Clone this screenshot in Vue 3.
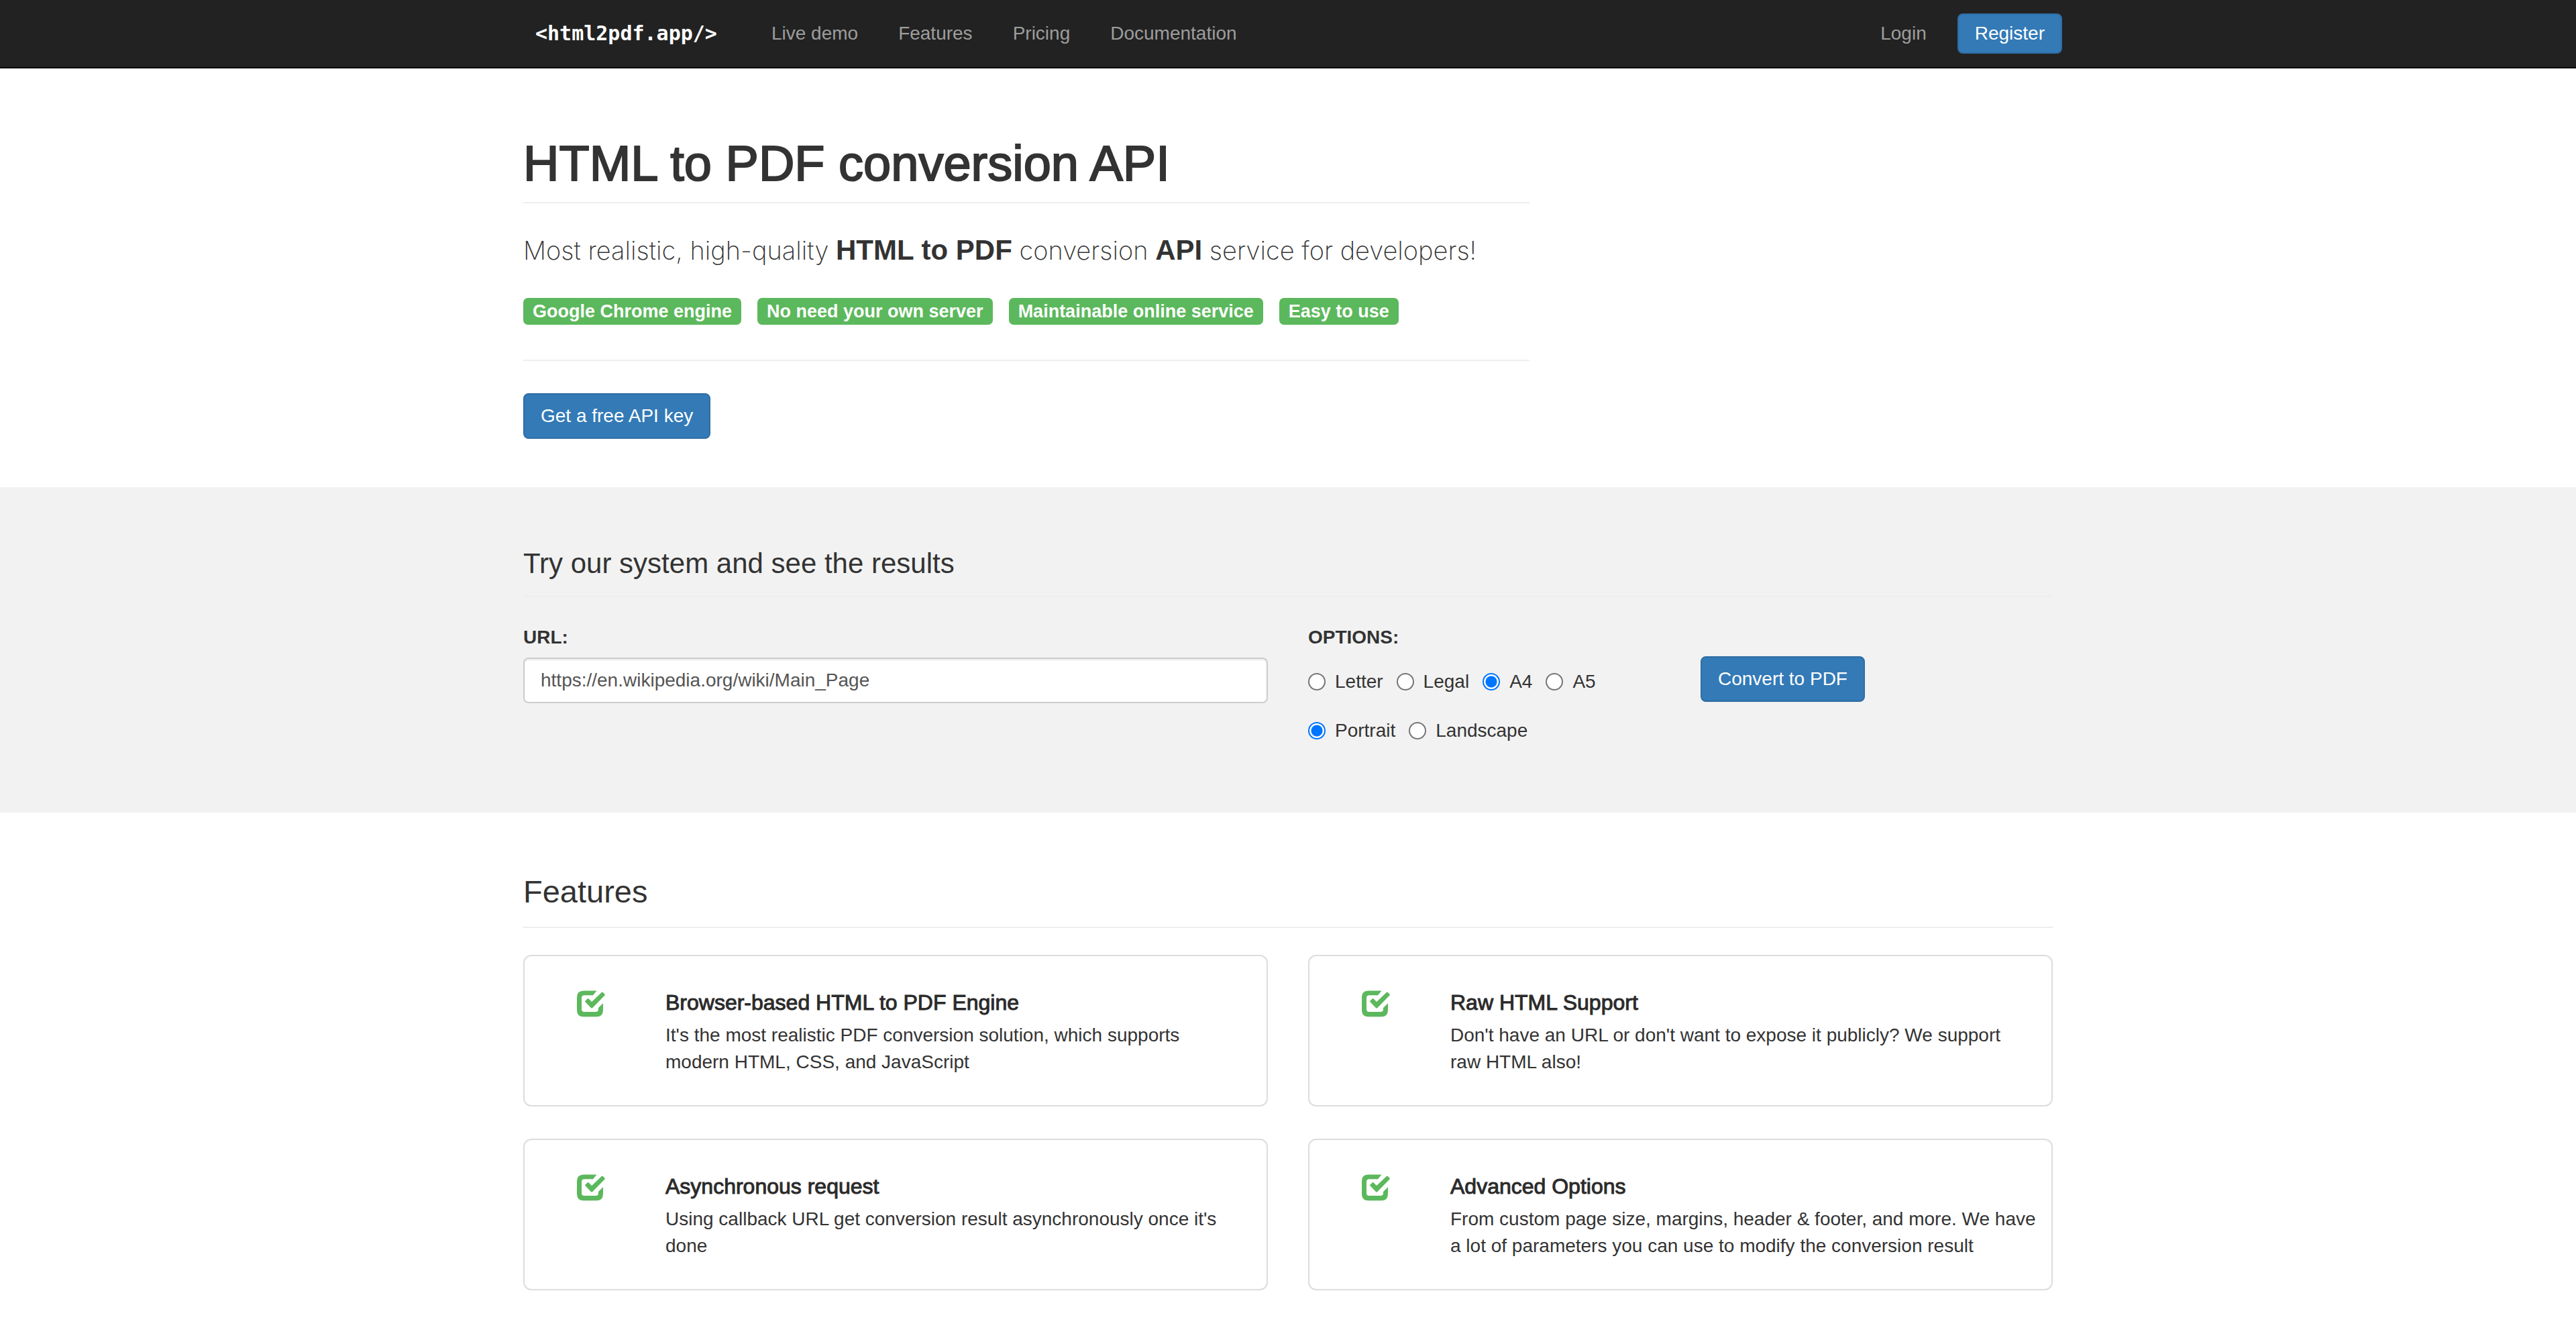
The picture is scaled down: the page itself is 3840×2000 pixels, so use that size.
<script setup>
import { ref } from 'vue'

const links = ['Live demo', 'Features', 'Pricing', 'Documentation']
const labels = ['Google Chrome engine', 'No need your own server', 'Maintainable online service', 'Easy to use']
const sizes = ['Letter', 'Legal', 'A4', 'A5']
const orientations = ['Portrait', 'Landscape']
const features = [
  { title: 'Browser-based HTML to PDF Engine', text: "It's the most realistic PDF conversion solution, which supports\nmodern HTML, CSS, and JavaScript" },
  { title: 'Raw HTML Support', text: "Don't have an URL or don't want to expose it publicly? We support\nraw HTML also!" },
  { title: 'Asynchronous request', text: "Using callback URL get conversion result asynchronously once it's\ndone" },
  { title: 'Advanced Options', text: 'From custom page size, margins, header & footer, and more. We have\na lot of parameters you can use to modify the conversion result' }
]
const url = ref('https://en.wikipedia.org/wiki/Main_Page')
const size = ref('A4')
const orientation = ref('Portrait')
</script>

<template>
  <div class="page">
    <header class="navbar">
      <nav class="container nav">
        <a class="brand" href="#">&lt;html2pdf.app/&gt;</a>
        <a v-for="link in links" :key="link" class="nav-link" href="#">{{ link }}</a>
        <a class="nav-link login" href="#">Login</a>
        <button class="btn btn-small" type="button">Register</button>
      </nav>
    </header>

    <main>
      <section class="container hero">
        <div class="intro">
          <h1>HTML to PDF conversion API</h1>
          <p class="lead">Most realistic, high-quality <strong>HTML to PDF</strong> conversion <strong>API</strong> service for developers!</p>
          <div class="labels">
            <span v-for="label in labels" :key="label" class="label">{{ label }}</span>
          </div>
          <hr>
          <button class="btn" type="button">Get a free API key</button>
        </div>
      </section>

      <section class="demo">
        <form class="container" @submit.prevent>
          <h2 class="demo-title">Try our system and see the results</h2>
          <div class="columns">
            <div>
              <label class="field-label" for="url">URL:</label>
              <input id="url" v-model="url" class="url" type="text">
            </div>
            <div class="columns">
              <div role="group" aria-labelledby="options">
                <span id="options" class="field-label">OPTIONS:</span>
                <div class="radios">
                  <label v-for="s in sizes" :key="s" class="radio"><input v-model="size" type="radio" name="size" :value="s">{{ s }}</label>
                </div>
                <div class="radios">
                  <label v-for="o in orientations" :key="o" class="radio"><input v-model="orientation" type="radio" name="orientation" :value="o">{{ o }}</label>
                </div>
              </div>
              <div class="submit">
                <button class="btn" type="submit">Convert to PDF</button>
              </div>
            </div>
          </div>
        </form>
      </section>

      <section class="container features">
        <h2 class="features-title">Features</h2>
        <div class="cards">
          <article v-for="f in features" :key="f.title" class="card">
            <svg class="check" viewBox="0 0 42 40" aria-hidden="true">
              <path fill="#5cb85c" d="M10 0.500H29.500L24 7.300H11Q7 7.300 7 11.300V28Q7 32 11 32H28Q32 32 32 28V26L39 19V29Q39 39.300 29 39.300H10Q0 39.300 0 29.300V10.500Q0 0.500 10 0.500Z" />
              <path fill="#5cb85c" d="M36.800 3Q37.800 2 38.800 3L41.500 5.700Q42.400 6.600 41.400 7.600L23.300 26Q22.100 27.200 20.900 26L12.600 17.300Q11.700 16.400 12.600 15.500L15.600 12.500Q16.600 11.500 17.600 12.500L21.300 16.300Q22.100 17.100 22.900 16.300Z" />
            </svg>
            <div>
              <h3>{{ f.title }}</h3>
              <p class="card-text">{{ f.text }}</p>
            </div>
          </article>
        </div>
      </section>
    </main>
  </div>
</template>

<style>
body {
  margin: 0;
  background: #fff;
}
</style>

<style scoped>
.page,
.page * {
  box-sizing: border-box;
}

.page {
  font-family: "Liberation Sans", Arial, sans-serif;
  font-size: 28px;
  line-height: 40px;
  color: #333;
}

h1,
h2,
h3,
p {
  margin: 0;
  font-weight: 400;
}

.container {
  max-width: 2340px;
  margin: 0 auto;
  padding: 0 30px;
}

.navbar {
  background: #222;
  border-bottom: 2px solid #080808;
}

.nav {
  display: flex;
  align-items: center;
  height: 100px;
  padding: 0 16px 0 48px;
}

.brand {
  margin-right: 51px;
  font-family: "DejaVu Sans Mono", monospace;
  font-size: 30px;
  font-weight: 700;
  color: #fff;
  text-decoration: none;
}

.nav-link {
  padding: 30px;
  color: #9d9d9d;
  text-decoration: none;
}

.login {
  margin-left: auto;
  padding-right: 46px;
}

.btn {
  height: 68px;
  padding: 0 24px;
  border: 2px solid #2e6da4;
  border-radius: 8px;
  background: #337ab7;
  color: #fff;
  font: inherit;
}

.btn-small {
  height: 60px;
}

.hero {
  padding-top: 100px;
  padding-bottom: 72px;
}

.intro {
  max-width: 1500px;
}

h1 {
  padding-bottom: 15px;
  border-bottom: 2px solid #eee;
  font-size: 74px;
  line-height: 84px;
  -webkit-text-stroke: 2px currentColor;
}

.lead {
  margin: 41px 0 42px;
  font-family: Inter, "Liberation Sans", sans-serif;
  font-size: 38px;
  font-weight: 200;
  line-height: 58px;
}

.lead strong {
  font-family: "Liberation Sans", Arial, sans-serif;
  font-size: 42px;
  font-weight: 700;
  line-height: 40px;
}

.labels {
  display: flex;
  gap: 24px;
}

.label {
  padding: 0 14px;
  border-radius: 7px;
  background: #5cb85c;
  color: #fff;
  font-size: 27px;
  font-weight: 700;
}

hr {
  height: 2px;
  margin: 52px 0 48px;
  border: 0;
  background: #eee;
}

.demo {
  padding: 91px 0 102px;
  background: #f2f2f2;
}

.demo-title {
  padding-bottom: 25px;
  margin-bottom: 40px;
  border-bottom: 2px solid #eee;
  font-size: 42px;
  line-height: 46px;
}

.columns {
  display: grid;
  grid-template-columns: 1fr 1fr;
  column-gap: 60px;
}

.field-label {
  display: block;
  margin-bottom: 10px;
  font-weight: 700;
}

.url {
  display: block;
  width: 100%;
  height: 68px;
  padding: 0 24px;
  border: 2px solid #ccc;
  border-radius: 8px;
  background: #fff;
  box-shadow: inset 0 2px 2px rgba(0, 0, 0, 0.075);
  color: #555;
  font: inherit;
}

.radios {
  display: flex;
  gap: 20px;
  margin-top: 33px;
}

.field-label + .radios {
  margin-top: 26px;
}

.radio {
  display: flex;
  align-items: center;
  gap: 14px;
}

.radio input {
  appearance: none;
  width: 26px;
  height: 26px;
  margin: 0;
  border: 2px solid #767676;
  border-radius: 50%;
  background: #fff;
}

.radio input:checked {
  border-color: #0075ff;
  background: radial-gradient(circle, #0075ff 8px, #fff 9px);
}

.submit {
  padding-top: 48px;
}

.features {
  padding-top: 92px;
  padding-bottom: 76px;
}

.features-title {
  padding-bottom: 26px;
  margin-bottom: 40px;
  border-bottom: 2px solid #eee;
  font-size: 47px;
  line-height: 52px;
}

.cards {
  display: grid;
  grid-template-columns: 1fr 1fr;
  gap: 48px 60px;
}

.card {
  display: flex;
  gap: 90px;
  padding: 51px 16px 44px 78px;
  border: 2px solid #ddd;
  border-radius: 12px;
}

.check {
  flex: none;
  width: 42px;
  height: 40px;
}

h3 {
  margin-bottom: 11px;
  color: #2b2b2b;
  font-size: 32px;
  line-height: 36px;
  -webkit-text-stroke: 1px currentColor;
}

.card-text {
  white-space: pre-line;
}
</style>
